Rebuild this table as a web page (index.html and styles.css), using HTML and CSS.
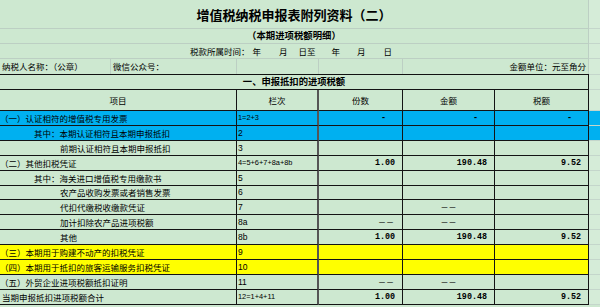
FILE: index.html
```html
<!DOCTYPE html>
<html lang="zh-CN">
<head>
<meta charset="utf-8">
<title>增值税纳税申报表附列资料（二）</title>
<link rel="stylesheet" href="styles.css">
</head>
<body>
<div class="sheet">
  <div class="top-row title-row"><div class="main">增值税纳税申报表附列资料（二）</div><div class="strip"></div></div>
  <div class="top-row sub-row"><div class="main">（本期进项税额明细）</div><div class="strip"></div></div>
  <div class="top-row period-row">
    <div class="main period">
      <span>税款所属时间：</span><span class="y1">年</span><span class="m1">月</span><span class="d1">日至</span><span class="y2">年</span><span class="m2">月</span><span class="d2">日</span>
    </div>
    <div class="strip"></div>
  </div>
  <div class="top-row info-row">
    <div class="ic ic-a">纳税人名称：（公章）</div>
    <div class="ic ic-b">微信公众号：</div>
    <div class="ic ic-c"></div>
    <div class="ic ic-d"></div>
    <div class="ic ic-e">金额单位：元至角分</div>
    <div class="strip"></div>
  </div>

  <div class="grid">
    <div class="row">
      <div class="cell section">一、申报抵扣的进项税额</div><div class="cell sc top"></div>
    </div>
    <div class="row">
      <div class="cell head">项目</div><div class="cell head c2">栏次</div><div class="cell head">份数</div><div class="cell head">金额</div><div class="cell head">税额</div><div class="cell sc"></div>
    </div>
    <div class="row blue">
      <div class="cell item l0">（一）认证相符的增值税专用发票</div><div class="cell code c2 f">1=2+3</div><div class="cell num dash">-</div><div class="cell num dash">-</div><div class="cell num dash">-</div><div class="cell sc"></div>
    </div>
    <div class="row blue">
      <div class="cell item l1">其中：本期认证相符且本期申报抵扣</div><div class="cell code c2">2</div><div class="cell num"></div><div class="cell num"></div><div class="cell num"></div><div class="cell sc"></div>
    </div>
    <div class="row">
      <div class="cell item l2">前期认证相符且本期申报抵扣</div><div class="cell code c2">3</div><div class="cell num"></div><div class="cell num"></div><div class="cell num"></div><div class="cell sc"></div>
    </div>
    <div class="row">
      <div class="cell item l0">（二）其他扣税凭证</div><div class="cell code c2 f">4=5+6+7+8a+8b</div><div class="cell num">1.00</div><div class="cell num">190.48</div><div class="cell num">9.52</div><div class="cell sc"></div>
    </div>
    <div class="row">
      <div class="cell item l1">其中：海关进口增值税专用缴款书</div><div class="cell code c2">5</div><div class="cell num"></div><div class="cell num"></div><div class="cell num"></div><div class="cell sc"></div>
    </div>
    <div class="row">
      <div class="cell item l2">农产品收购发票或者销售发票</div><div class="cell code c2">6</div><div class="cell num"></div><div class="cell num"></div><div class="cell num"></div><div class="cell sc"></div>
    </div>
    <div class="row">
      <div class="cell item l2">代扣代缴税收缴款凭证</div><div class="cell code c2">7</div><div class="cell num"></div><div class="cell mid">－－</div><div class="cell num"></div><div class="cell sc"></div>
    </div>
    <div class="row">
      <div class="cell item l2">加计扣除农产品进项税额</div><div class="cell code c2">8a</div><div class="cell num dd">－－</div><div class="cell mid">－－</div><div class="cell num"></div><div class="cell sc"></div>
    </div>
    <div class="row">
      <div class="cell item l2">其他</div><div class="cell code c2">8b</div><div class="cell num">1.00</div><div class="cell num">190.48</div><div class="cell num">9.52</div><div class="cell sc"></div>
    </div>
    <div class="row yellow">
      <div class="cell item l0">（三）本期用于购建不动产的扣税凭证</div><div class="cell code c2">9</div><div class="cell num"></div><div class="cell num"></div><div class="cell num"></div><div class="cell sc"></div>
    </div>
    <div class="row yellow">
      <div class="cell item l0">（四）本期用于抵扣的旅客运输服务扣税凭证</div><div class="cell code c2">10</div><div class="cell num"></div><div class="cell num"></div><div class="cell num"></div><div class="cell sc"></div>
    </div>
    <div class="row">
      <div class="cell item l0">（五）外贸企业进项税额抵扣证明</div><div class="cell code c2">11</div><div class="cell num dd">－－</div><div class="cell mid">－－</div><div class="cell num"></div><div class="cell sc"></div>
    </div>
    <div class="row">
      <div class="cell item lt">当期申报抵扣进项税额合计</div><div class="cell code c2 f">12=1+4+11</div><div class="cell num">1.00</div><div class="cell num">190.48</div><div class="cell num">9.52</div><div class="cell sc"></div>
    </div>
  </div>
</div>
</body>
</html>
```

FILE: styles.css
```css
* { box-sizing: border-box; }

html, body {
  margin: 0;
  padding: 0;
}

body {
  width: 600px;
  height: 307px;
  overflow: hidden;
  background: #cde8d0;
  color: #000;
  font-family: "Noto Sans CJK SC", "Noto Sans", sans-serif;
  font-size: 8.5px;
  line-height: 1;
}

.sheet {
  width: 600px;
}

/* ---------- top (unbordered) area ---------- */
.top-row {
  display: flex;
}

.top-row .main {
  width: 589px;
  border-right: 1px solid #bccfc3;
  border-bottom: 1px solid #bccfc3;
  display: flex;
  align-items: center;
  white-space: nowrap;
}

.strip {
  flex: 1;
  background: #d5ecd8;
  border-bottom: 1px solid #c4d6cb;
}

.title-row { height: 29px; }
.title-row .main {
  justify-content: center;
  font-size: 13px;
  font-weight: 700;
  letter-spacing: 0;
}

.sub-row { height: 15px; }
.sub-row .main {
  justify-content: center;
  font-size: 9.4px;
  font-weight: 700;
}

.period-row { height: 15px; }
.period {
  padding-left: 190px;
}
.period .y1 { margin-left: 3px; }
.period .m1 { margin-left: 18px; }
.period .d1 { margin-left: 11px; }
.period .y2 { margin-left: 16px; }
.period .m2 { margin-left: 17px; }
.period .d2 { margin-left: 18px; }

.info-row { height: 15px; }
.info-row .strip { border-bottom: none; }
.ic {
  height: 15px;
  display: flex;
  align-items: center;
  white-space: nowrap;
  border-right: 1px solid #bccfc3;
}
.ic-a { width: 111px; padding-left: 2px; }
.ic-b { width: 126px; padding-left: 2px; }
.ic-c { width: 82px; }
.ic-d { width: 84px; }
.ic-e { width: 186px; justify-content: flex-end; padding-right: 2px; }

/* ---------- bordered table ---------- */
.grid {
  display: grid;
  grid-template-columns: 237px 82px 84px 92px 94px 11px;
  grid-template-rows: 16px 21px repeat(5, 15px) 14px repeat(7, 15px);
}

.row { display: contents; }

.cell {
  display: flex;
  align-items: center;
  white-space: nowrap;
  overflow: hidden;
  border-right: 1px solid #141414;
  border-bottom: 1px solid #141414;
}

.c2 { border-right: 2px solid #555; }

.sc {
  border-right: none;
  border-bottom: 1px solid #c4d6cb;
  background: #d5ecd8;
}
.sc.top { border-top: 1px solid #c4d6cb; }

.section {
  grid-column: 1 / 6;
  justify-content: center;
  border-top: 1px solid #111;
  font-size: 9.3px;
  font-weight: 700;
}

.head {
  justify-content: center;
}

.item.l0 { padding-left: 0; }
.item.l1 { padding-left: 34px; }
.item.l2 { padding-left: 60px; }
.item.lt { padding-left: 2px; }

.code {
  padding-left: 1px;
  font-family: "Liberation Sans", Arial, sans-serif;
  font-size: 8.5px;
}
.code.f {
  font-size: 7.4px;
}

.num {
  justify-content: flex-end;
  padding-right: 7px;
  font-family: "Liberation Mono", "Courier New", monospace;
  font-size: 8.4px;
  font-weight: 700;
}
.num.dash { padding-right: 16px; }
.num.dd {
  padding-right: 8px;
  font-family: "Noto Sans CJK SC", sans-serif;
  font-weight: 400;
  font-size: 8px;
}

.mid {
  justify-content: center;
  font-size: 8px;
}

.row.blue > .cell { background: #00b0f0; }
.row.yellow > .cell:not(.sc) { background: #ffff00; }
```
